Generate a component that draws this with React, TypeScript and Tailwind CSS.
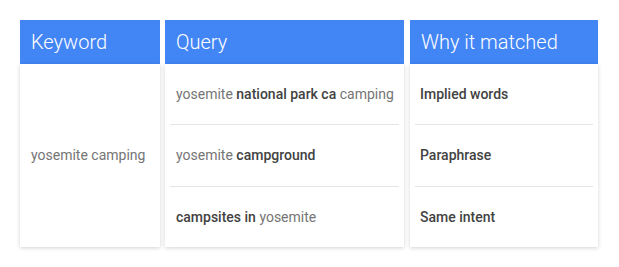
import React from "react"

type Part = { text: string; bold?: boolean }

const queries: Part[][] = [
  [{ text: "yosemite " }, { text: "national park ca", bold: true }, { text: " camping" }],
  [{ text: "yosemite " }, { text: "campground", bold: true }],
  [{ text: "campsites in", bold: true }, { text: " yosemite" }],
]

const reasons = ["Implied words", "Paraphrase", "Same intent"]

function Header({ title }: { title: string }) {
  return (
    <div className="h-[44px] bg-[#4285f4] flex items-center pl-[11px] text-white text-[20px] font-light leading-none">
      {title}
    </div>
  )
}

function Rows({ children }: { children: React.ReactNode[] }) {
  return (
    <div className="flex flex-col px-[5px]">
      {children.map((c, i) => (
        <div key={i} className="flex flex-col">
          {i > 0 && <div className="h-px bg-[#e5e5e5]" />}
          <div className={`flex items-center px-[6px] whitespace-nowrap ${i === 0 ? "h-[60px]" : "h-[61px]"}`}>{c}</div>
        </div>
      ))}
    </div>
  )
}

export default function App() {
  return (
    <div
      className="w-[619px] h-[267px] bg-white pt-[20px] pl-[20px] flex gap-[5px] text-[14px]"
      style={{ fontFamily: "Roboto, 'Liberation Sans', sans-serif" }}
    >
      {/* Keyword */}
      <div className="w-[140px] flex flex-col">
        <Header title="Keyword" />
        <div className="h-[183px] bg-white shadow-[0_1px_4px_rgba(0,0,0,0.18)] flex items-center pl-[11px] text-[#757575]">
          yosemite camping
        </div>
      </div>

      {/* Query */}
      <div className="w-[239px] flex flex-col">
        <Header title="Query" />
        <div className="h-[183px] bg-white shadow-[0_1px_4px_rgba(0,0,0,0.18)]">
          <Rows>
            {queries.map((q, i) => (
              <span key={i} className="text-[#757575]">
                {q.map((p, j) =>
                  p.bold ? (
                    <span key={j} className="font-medium text-[#424242]">{p.text}</span>
                  ) : (
                    <span key={j}>{p.text}</span>
                  )
                )}
              </span>
            ))}
          </Rows>
        </div>
      </div>

      {/* Why it matched */}
      <div className="w-[188px] flex flex-col ml-px">
        <Header title="Why it matched" />
        <div className="h-[183px] bg-white shadow-[0_1px_4px_rgba(0,0,0,0.18)]">
          <Rows>
            {reasons.map((r) => (
              <span key={r} className="font-medium text-[#424242] -ml-px">{r}</span>
            ))}
          </Rows>
        </div>
      </div>
    </div>
  )
}
